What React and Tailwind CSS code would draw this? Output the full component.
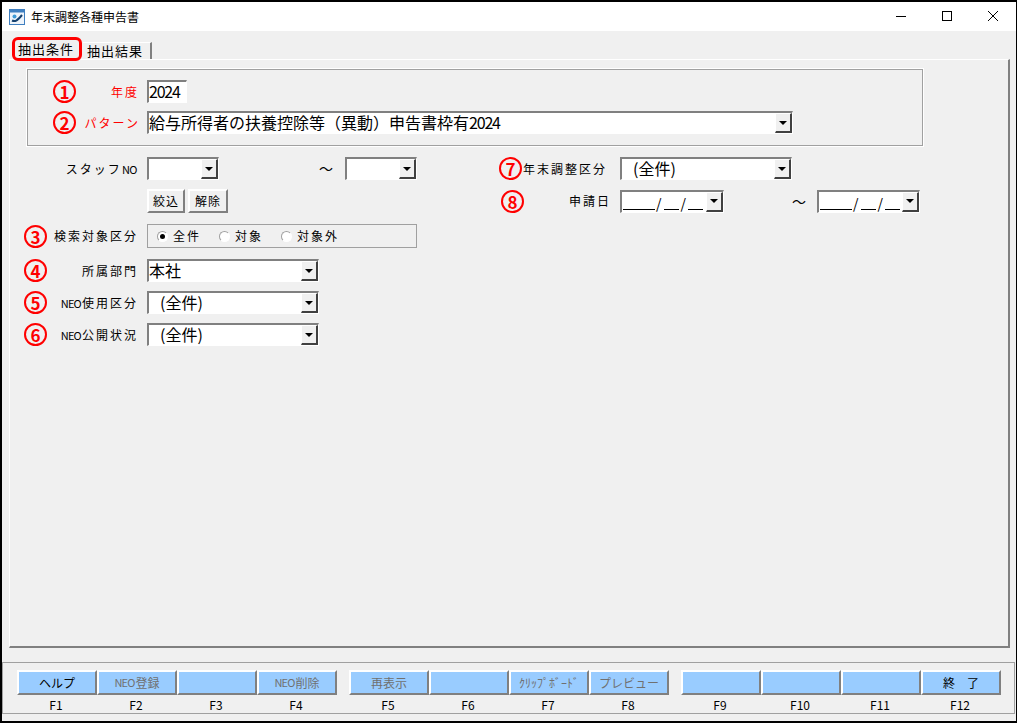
const font = { fontFamily: '"Noto Sans CJK JP", "Liberation Sans", sans-serif' };

function Neo() {
  return <span className="text-[11px] tracking-[-0.8px] pr-[1px]">NEO</span>;
}

function Num({ n }) {
  return (
    <div className="w-[23px] h-[23px] shrink-0 rounded-full border-2 border-[#ff0000] flex items-center justify-center text-[#ff0000] text-[17px] font-bold leading-none">
      {n}
    </div>
  );
}

function Arrow() {
  return (
    <div className="w-[17px] shrink-0 h-full bg-[#f0f0f0] border-t border-l border-t-white border-l-white border-r-2 border-b-2 border-r-[#404040] border-b-[#404040] flex items-center justify-center">
      <div className="w-0 h-0 border-x-[4px] border-x-transparent border-t-[4px] border-t-black" />
    </div>
  );
}

function Field({ width, children, arrow = true }) {
  return (
    <div
      className="flex shrink-0 h-full bg-white border-t-2 border-l-2 border-t-[#808080] border-l-[#808080] border-r border-b border-r-white border-b-white"
      style={{ width }}
    >
      <div className="flex-1 min-w-0 text-[16px] leading-[19px] text-black whitespace-nowrap">
        {children}
      </div>
      {arrow && <Arrow />}
    </div>
  );
}

function AllItems() {
  return <span className="pl-[11px]">(全件)</span>;
}

function DateField({ width }) {
  return (
    <Field width={width}>
      <div className="flex items-end h-full pb-[2px] gap-[2px] pl-[1px] text-[14px] leading-none">
        <span className="w-[32px] border-b border-black" />
        <span className="-ml-[1px]">/</span>
        <span className="w-[15px] border-b border-black" />
        <span>/</span>
        <span className="w-[15px] border-b border-black" />
      </div>
    </Field>
  );
}

function Label({ children, red }) {
  return (
    <span className={`text-[12px] tracking-[2px] -mr-[2px] whitespace-nowrap ${red ? "text-[#ff0000]" : "text-black"}`}>
      {children}
    </span>
  );
}

function SelectRow({ n, label, value, className }) {
  return (
    <div className={`flex items-center h-[23px] ${className}`}>
      <div className="w-[137px] pl-[14px] pr-[11px] flex items-center justify-between">
        <Num n={n} />
        <Label>{label}</Label>
      </div>
      <Field width={172}>{value}</Field>
    </div>
  );
}

function Radio({ checked, label, className }) {
  return (
    <div className={`flex items-center gap-[5px] ${className}`}>
      <div className="w-[11px] h-[11px] rounded-full bg-white border border-[#a0a0a0] border-r-white border-b-white flex items-center justify-center">
        {checked && <div className="w-[5px] h-[5px] rounded-full bg-black" />}
      </div>
      <span className="text-[12px] tracking-[2px]">{label}</span>
    </div>
  );
}

function FKey({ label, fkey, dim }) {
  return (
    <div className="w-[80px] flex flex-col items-center">
      <div
        className={`w-full h-[25px] bg-[#99ccff] border-t-2 border-l-2 border-t-white border-l-white border-r-2 border-b-2 border-r-[#808080] border-b-[#808080] flex items-center justify-center whitespace-nowrap text-[12px] ${dim ? "text-[#707070]" : "text-black"}`}
      >
        {label}
      </div>
      <div className="mt-[3px] pr-[2px] text-[12px] leading-[13px] text-black">{fkey}</div>
    </div>
  );
}

function Group({ children }) {
  return <div className="flex">{children}</div>;
}

export default function App() {
  return (
    <div style={font} className="w-[1017px] h-[723px] flex flex-col bg-white border-l-2 border-t-2 border-b-2 border-r border-black overflow-hidden">
      {/* Title bar */}
      <div className="h-[29px] shrink-0 bg-white flex items-center pl-[7px]">
        <svg width="16" height="16" viewBox="0 0 16 16">
          <rect x="0.5" y="0.5" width="15" height="15" fill="#eef4fb" stroke="#3f7fc0" />
          <rect x="0.5" y="0.5" width="15" height="3" fill="#3f7fc0" />
          <circle cx="5.5" cy="7.5" r="2" fill="#3f9ad6" />
          <path d="M3 11.5 C6 13 8 12 13 6" stroke="#14406e" strokeWidth="2" fill="none" />
        </svg>
        <span className="ml-[6px] text-[12px] text-black">年末調整各種申告書</span>
        <div className="ml-auto flex items-center h-full">
          <svg className="w-[46px] h-[29px]" viewBox="0 0 46 29"><path d="M18 14.5h10" stroke="#000" /></svg>
          <svg className="w-[46px] h-[29px]" viewBox="0 0 46 29"><rect x="18.5" y="9.5" width="9" height="9" fill="none" stroke="#000" /></svg>
          <svg className="w-[46px] h-[29px]" viewBox="0 0 46 29"><path d="M18 9l10 10M28 9L18 19" stroke="#000" /></svg>
        </div>
      </div>

      <div className="flex-1 flex flex-col bg-[#f0f0f0] min-h-0">
        {/* Tabs */}
        <div className="h-[28px] shrink-0 flex items-end pl-[10px]">
          <div className="relative z-10 w-[70px] h-[24px] -mb-[2px] pr-[2px] rounded-[6px] border-[3px] border-[#ff0000] bg-[#f0f0f0] flex items-center justify-center text-[13px] tracking-[1px] text-black">
            抽出条件
          </div>
          <div className="w-[69px] h-[17px] ml-[1px] pr-[3px] bg-[#f0f0f0] border-t border-white border-r-2 border-r-[#808080] flex items-center justify-center text-[13px] tracking-[1px] text-black">
            抽出結果
          </div>
        </div>

        {/* Panel */}
        <div className="ml-[7px] w-[1001px] h-[589px] shrink-0 border-t border-l border-t-white border-l-white border-r-2 border-b-2 border-r-[#808080] border-b-[#808080] pt-[9px]">
          <div className="ml-[17px] w-[896px] h-[77px] border border-[#a0a0a0] outline-1 outline-white pt-[10px]">
            <div className="flex items-center h-[23px]">
              <div className="w-[119px] pl-[25px] pr-[10px] flex items-center justify-between">
                <Num n="1" />
                <Label red>年度</Label>
              </div>
              <Field width={40} arrow={false}><span className="tracking-[-1.2px]">2024</span></Field>
            </div>
            <div className="flex items-center h-[23px] mt-[8px]">
              <div className="w-[119px] pl-[25px] pr-[9px] flex items-center justify-between">
                <Num n="2" />
                <Label red>パターン</Label>
              </div>
              <Field width={646}>給与所得者の扶養控除等（異動）申告書枠有<span className="tracking-[-1.2px]">2024</span></Field>
            </div>
          </div>

          <div className="flex items-center h-[23px] mt-[11px]">
            <div className="w-[137px] pr-[12px] flex justify-end">
              <Label>スタッフ<span className="text-[11px] tracking-[-0.5px]">NO</span></Label>
            </div>
            <Field width={72} />
            <span className="ml-[100px] w-[26px] text-[14px]">～</span>
            <Field width={72} />
            <div className="ml-[82px] w-[121px] flex items-center gap-[1px]">
              <Num n="7" />
              <Label>年末調整区分</Label>
            </div>
            <Field width={172}><AllItems /></Field>
          </div>

          <div className="flex items-center h-[24px] mt-[9px]">
            <div className="w-[137px]" />
            <button className="w-[38px] h-[24px] bg-[#f0f0f0] border-t-2 border-l-2 border-t-white border-l-white border-r-2 border-b-2 border-r-[#808080] border-b-[#808080] text-[12px] tracking-[1px]">絞込</button>
            <button className="w-[40px] h-[24px] ml-[3px] bg-[#f0f0f0] border-t-2 border-l-2 border-t-white border-l-white border-r-2 border-b-2 border-r-[#808080] border-b-[#808080] text-[12px] tracking-[1px]">解除</button>
            <div className="ml-[273px] w-[119px] pr-[11px] flex items-center justify-between">
              <Num n="8" />
              <Label>申請日</Label>
            </div>
            <div className="flex h-[23px] items-center">
              <DateField width={104} />
              <span className="ml-[68px] w-[25px] text-[14px]">～</span>
              <DateField width={103} />
            </div>
          </div>

          <div className="flex items-center h-[24px] mt-[11px]">
            <div className="w-[137px] pl-[14px] pr-[11px] flex items-center justify-between">
              <Num n="3" />
              <Label>検索対象区分</Label>
            </div>
            <div className="w-[270px] h-[24px] border border-[#a0a0a0] flex items-center pl-[9px]">
              <Radio checked label="全件" />
              <Radio label="対象" className="ml-[18px]" />
              <Radio label="対象外" className="ml-[18px]" />
            </div>
          </div>

          <SelectRow n="4" label="所属部門" value="本社" className="mt-[11px]" />
          <SelectRow n="5" label={<><Neo />使用区分</>} value={<AllItems />} className="mt-[9px]" />
          <SelectRow n="6" label={<><Neo />公開状況</>} value={<AllItems />} className="mt-[9px]" />
        </div>

        {/* Function keys */}
        <div className="mt-[14px] mr-[1px] h-[52px] border border-[#a0a0a0] pt-[7px] pl-[14px] flex gap-[12px]">
          <Group>
            <FKey label="ヘルプ" fkey="F1" />
            <FKey label={<><Neo />登録</>} fkey="F2" dim />
            <FKey label="" fkey="F3" />
            <FKey label={<><Neo />削除</>} fkey="F4" dim />
          </Group>
          <Group>
            <FKey label="再表示" fkey="F5" dim />
            <FKey label="" fkey="F6" />
            <FKey label="ｸﾘｯﾌﾟﾎﾞｰﾄﾞ" fkey="F7" dim />
            <FKey label="プレビュー" fkey="F8" dim />
          </Group>
          <Group>
            <FKey label="" fkey="F9" />
            <FKey label="" fkey="F10" />
            <FKey label="" fkey="F11" />
            <FKey label="終　了" fkey="F12" />
          </Group>
        </div>
      </div>
    </div>
  );
}
